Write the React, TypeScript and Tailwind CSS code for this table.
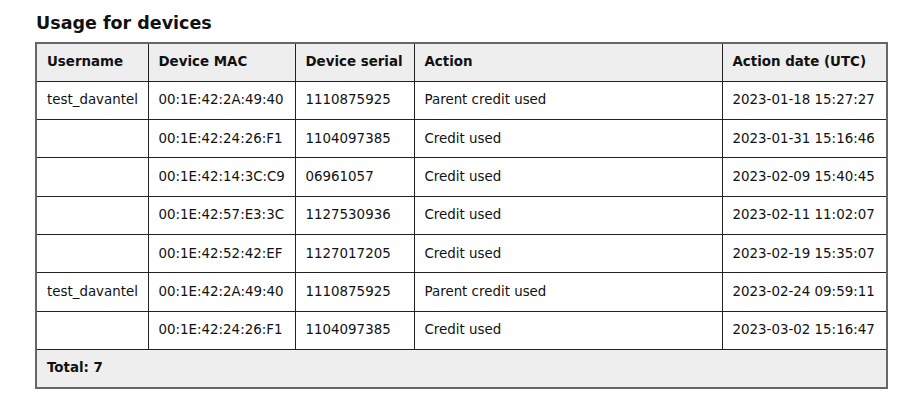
import React from 'react';

const rows = [
  { user: 'test_davantel', mac: '00:1E:42:2A:49:40', serial: '1110875925', action: 'Parent credit used', date: '2023-01-18 15:27:27' },
  { user: '', mac: '00:1E:42:24:26:F1', serial: '1104097385', action: 'Credit used', date: '2023-01-31 15:16:46' },
  { user: '', mac: '00:1E:42:14:3C:C9', serial: '06961057', action: 'Credit used', date: '2023-02-09 15:40:45' },
  { user: '', mac: '00:1E:42:57:E3:3C', serial: '1127530936', action: 'Credit used', date: '2023-02-11 11:02:07' },
  { user: '', mac: '00:1E:42:52:42:EF', serial: '1127017205', action: 'Credit used', date: '2023-02-19 15:35:07' },
  { user: 'test_davantel', mac: '00:1E:42:2A:49:40', serial: '1110875925', action: 'Parent credit used', date: '2023-02-24 09:59:11' },
  { user: '', mac: '00:1E:42:24:26:F1', serial: '1104097385', action: 'Credit used', date: '2023-03-02 15:16:47' },
];

const cell = 'border-[1.5px] border-[#222] px-[10px] h-[38.3px] align-middle whitespace-nowrap overflow-hidden';

export default function App() {
  return (
    <div className="bg-white min-h-[411px] w-[914px] pl-[35px] pt-[11px] text-[#111] font-['DejaVu_Sans',sans-serif]">
      <h2 className="text-[17.5px] font-bold leading-[24px] mb-[7px] pl-px">Usage for devices</h2>
      <table className="w-[851px] table-fixed border-collapse border-2 border-[#666] text-[13.4px] text-left">
        <colgroup>
          <col className="w-[112px]" />
          <col className="w-[147px]" />
          <col className="w-[119px]" />
          <col className="w-[308px]" />
          <col className="w-[165px]" />
        </colgroup>
        <thead>
          <tr className="bg-[#eeeeee] font-bold">
            <th className={cell}>Username</th>
            <th className={cell}>Device MAC</th>
            <th className={cell}>Device serial</th>
            <th className={cell}>Action</th>
            <th className={cell}>Action date (UTC)</th>
          </tr>
        </thead>
        <tbody>
          {rows.map((r, i) => (
            <tr key={i}>
              <td className={cell}>{r.user}</td>
              <td className={cell}>{r.mac}</td>
              <td className={cell}>{r.serial}</td>
              <td className={cell}>{r.action}</td>
              <td className={cell}>{r.date}</td>
            </tr>
          ))}
        </tbody>
        <tfoot>
          <tr className="bg-[#eeeeee]">
            <td colSpan={5} className={cell + ' font-bold'}>Total: 7</td>
          </tr>
        </tfoot>
      </table>
    </div>
  );
}
